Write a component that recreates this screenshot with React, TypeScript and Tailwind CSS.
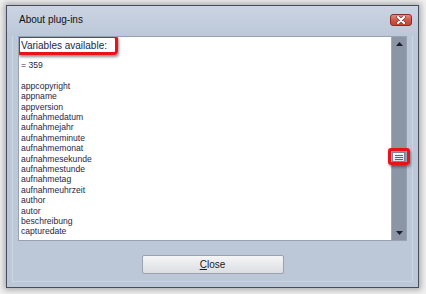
import React from 'react';

const variables = [
  'appcopyright',
  'appname',
  'appversion',
  'aufnahmedatum',
  'aufnahmejahr',
  'aufnahmeminute',
  'aufnahmemonat',
  'aufnahmesekunde',
  'aufnahmestunde',
  'aufnahmetag',
  'aufnahmeuhrzeit',
  'author',
  'autor',
  'beschreibung',
  'capturedate',
];

const App: React.FC = () => {
  return (
    <div className="w-[426px] h-[294px] bg-[#f1f1f1] pt-[5px] pl-[6px] overflow-hidden font-['Liberation_Sans',Arial,sans-serif]">
      {/* Window */}
      <div className="w-[413px] h-[283px] flex flex-col border border-[#454e5e] bg-[#bcc7d8] shadow-[0_0_6px_2px_rgba(0,0,0,0.3)]">
        {/* Title bar */}
        <div className="h-[30px] shrink-0 flex items-start justify-between pl-[12px] pr-[6px] bg-gradient-to-b from-[#cbd4e2] to-[#bcc7d8]">
          <span className="mt-[8px] text-[10px] leading-[12px] text-[#111]">About plug-ins</span>
          <div className="mt-[8px] w-[22px] h-[12px] rounded-[3px] border border-[#8a2d25] bg-gradient-to-b from-[#e7897c] via-[#d0574a] to-[#c44436] flex items-center justify-center">
            <svg width="10" height="8" viewBox="0 0 10 8">
              <path d="M2 1 L8 7 M8 1 L2 7" stroke="#6a3a34" strokeWidth="3.4" strokeLinecap="round" />
              <path d="M2 1 L8 7 M8 1 L2 7" stroke="#ffffff" strokeWidth="2.2" strokeLinecap="round" />
            </svg>
          </div>
        </div>

        {/* Client area */}
        <div className="flex-1 flex flex-col mx-[5px] mb-[5px] border-x border-b border-[#cbd4e1] px-[5px]">
          {/* List box */}
          <div className="h-[205px] shrink-0 flex border border-[#97a2b3] bg-white">
            <div className="relative flex-1 overflow-hidden pl-[2px] pt-[2px] text-[#1f2747]">
              <div className="text-[10px] leading-[14px] text-[#1c2545]">Variables available:</div>
              <div className="absolute left-[-2px] top-[-2px] w-[101px] h-[20px] rounded-[4px] border-[3px] border-[#e8121c] shadow-[1px_2px_3px_rgba(0,0,0,0.45)]" />
              <div className="mt-[7px] text-[8.6px] leading-[10.4px]">= 359</div>
              <div className="h-[10.4px]" />
              {variables.map((v) => (
                <div key={v} className="text-[8.6px] leading-[10.4px]">{v}</div>
              ))}
            </div>
            {/* Scrollbar */}
            <div className="relative w-[15px] shrink-0 bg-[#8c95a6] border-l border-[#a3acbb] flex flex-col items-center justify-between pt-[5px] pb-[5px]">
              <svg width="7" height="4" viewBox="0 0 7 4">
                <path d="M0 4 L3.5 0 L7 4 Z" fill="#1b1f27" />
              </svg>
              <svg width="7" height="4" viewBox="0 0 7 4">
                <path d="M0 0 L7 0 L3.5 4 Z" fill="#1b1f27" />
              </svg>
              {/* Thumb */}
              <div className="absolute left-[0px] top-[115px] w-[13px] h-[10px] border border-[#7a8496] bg-gradient-to-b from-[#f7f8fa] to-[#dde1e7] flex flex-col items-center justify-center gap-[1px]">
                <div className="w-[8px] h-[1px] bg-[#5e6674]" />
                <div className="w-[8px] h-[1px] bg-[#5e6674]" />
                <div className="w-[8px] h-[1px] bg-[#5e6674]" />
              </div>
              <div className="absolute left-[-4px] top-[111px] w-[22px] h-[17px] rounded-[3px] border-[3px] border-[#e8121c] shadow-[1px_2px_3px_rgba(0,0,0,0.4)]" />
            </div>
          </div>

          {/* Button row */}
          <div className="flex justify-center mt-[14px]">
            <div className="w-[142px] h-[19px] rounded-[2px] border border-[#98a2b2] bg-gradient-to-b from-[#f5f5f6] to-[#dcdee2] flex items-center justify-center text-[10px] text-[#1a1a1a]">
              <span><span className="underline">C</span>lose</span>
            </div>
          </div>
        </div>
      </div>
    </div>
  );
};

export default App;
